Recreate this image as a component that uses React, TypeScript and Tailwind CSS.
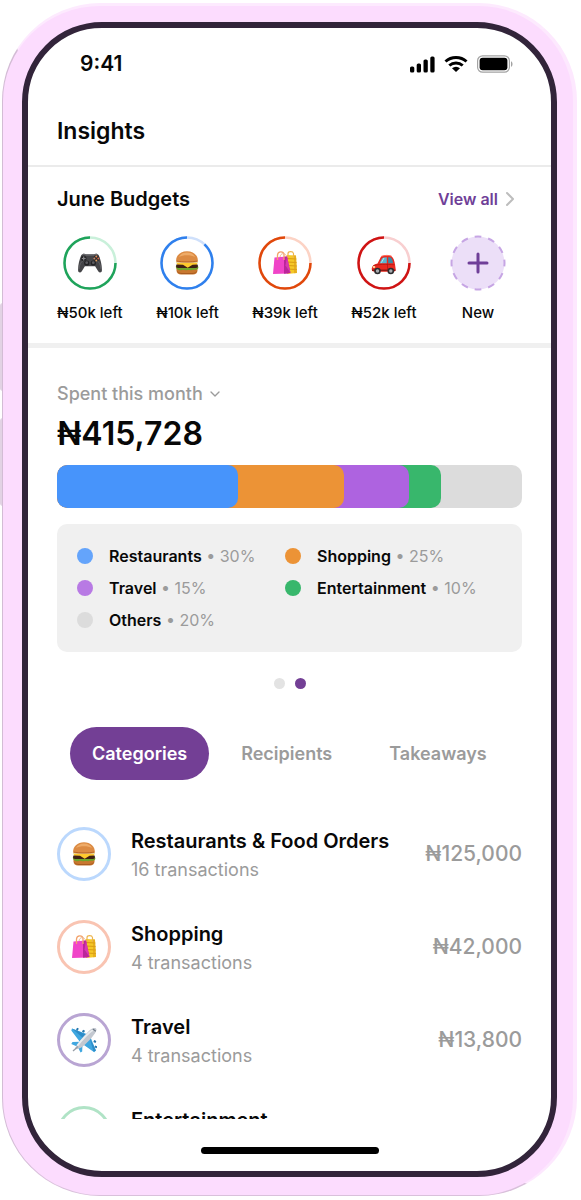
import { useState } from 'react';
import type { ReactNode } from 'react';
import { ChevronDown, ChevronRight } from 'lucide-react';

type IconName = 'game' | 'burger' | 'bags' | 'car' | 'plane';

interface Budget {
    icon: IconName;
    left: string;
    color: string;
    track: string;
    used: number;
}

interface Share {
    name: string;
    percent: number;
    dot: string;
}

interface Category {
    name: string;
    ring: string;
    icon?: IconName;
    count?: number;
    amount?: string;
}

const budgets: Budget[] = [
    { icon: 'game', left: '₦50k left', color: '#1fa35b', track: '#c9f0da', used: 75 },
    { icon: 'burger', left: '₦10k left', color: '#2f80ed', track: '#cfe0fb', used: 88 },
    { icon: 'bags', left: '₦39k left', color: '#e0480b', track: '#fcd3c5', used: 75 },
    { icon: 'car', left: '₦52k left', color: '#cf1414', track: '#f8cfd0', used: 75 },
];

const shares: Share[] = [
    { name: 'Restaurants', percent: 30, dot: 'bg-[#64a4fb]' },
    { name: 'Shopping', percent: 25, dot: 'bg-[#ec9336]' },
    { name: 'Travel', percent: 15, dot: 'bg-[#b87ae4]' },
    { name: 'Entertainment', percent: 10, dot: 'bg-[#38b76c]' },
    { name: 'Others', percent: 20, dot: 'bg-[#dcdcdc]' },
];

// Every segment starts at the left edge, the shorter ones lie on top
const segments = [
    { end: 82.6, color: 'bg-[#38b76c]' },
    { end: 75.8, color: 'bg-[#ae63e0]' },
    { end: 61.7, color: 'bg-[#ec9336]' },
    { end: 38.9, color: 'bg-[#4794fb]' },
];

const categories: Category[] = [
    { icon: 'burger', name: 'Restaurants & Food Orders', count: 16, amount: '₦125,000', ring: 'border-[#bbd8fd]' },
    { icon: 'bags', name: 'Shopping', count: 4, amount: '₦42,000', ring: 'border-[#f9c4b2]' },
    { icon: 'plane', name: 'Travel', count: 4, amount: '₦13,800', ring: 'border-[#b9a5d3]' },
    { name: 'Entertainment', ring: 'border-[#b0e3c6]' },
];

const tabs = ['Categories', 'Recipients', 'Takeaways'];

const drawings: Record<IconName, ReactNode> = {
    game: (
        <>
            <path d="M4.2 5.2C5 3.6 7.4 3.2 9 4.2h8c1.6-1 4-.6 4.800 1 1.800 4 3.300 10.300 3.100 15.300-.1 2.400-2.600 2.600-3.700.8l-3.100-5.100H7.900l-3.100 5.100c-1.100 1.800-3.600 1.600-3.700-.8C.9 15.500 2.400 9.200 4.200 5.200z" fill="#454548" />
            <path d="M4.800 5.300C5.700 4 7.500 4 8.900 5h8.200c1.400-1 3.200-1 4.100.3" stroke="#77777b" fill="none" />
            <path d="M2 19c.5-4.500 2-7.500 4.500-8.500M24 19c-.5-4.500-2-7.500-4.500-8.500" stroke="#646468" fill="none" strokeWidth=".8" />
            <circle cx="6.700" cy="8.500" r="2.800" fill="#252527" />
            <path d="M6.700 6.600v3.800M4.800 8.500h3.800" stroke="#87878b" strokeWidth="1.200" />
            <circle cx="9.700" cy="13" r="2.600" fill="#222224" />
            <circle cx="16.300" cy="13" r="2.600" fill="#222224" />
            <circle cx="9.700" cy="12.700" r="1.400" fill="#5c5c60" />
            <circle cx="16.300" cy="12.700" r="1.400" fill="#5c5c60" />
            <circle cx="19.300" cy="8.500" r="3" fill="#29292b" />
            <circle cx="19.300" cy="6.500" r="1" fill="#e08a55" />
            <circle cx="17.300" cy="8.500" r="1" fill="#c98a6a" />
            <circle cx="21.300" cy="8.500" r="1" fill="#d86b4b" />
            <circle cx="19.300" cy="10.500" r="1" fill="#e0a060" />
        </>
    ),
    burger: (
        <>
            <path d="M2.500 17h21v3.500c0 2.700-2 4-4.500 4H7c-2.500 0-4.500-1.300-4.500-4z" fill="#c8772f" />
            <path d="M3.500 21.500c1 1.600 3 2 4.500 2h10c1.500 0 3.500-.4 4.500-2" stroke="#a95c20" fill="none" />
            <path d="M1.800 16.500c1.500-1 3 .2 4.500 0s3-.2 4.500.3 3-.3 4.500 0 3-.5 4.500 0 3-1 4.400-.3c.5 1.500-.2 3-1.700 3-1.500.8-3-.2-4.500.5s-3-.3-5 .2-3.500-.8-5-.2-5.800.6-6.200-3.500z" fill="#6ea52c" />
            <rect x="2" y="14" width="22" height="4" rx="2" fill="#3f2015" />
            <path d="M2.200 12.500h21.600l-1 2-4.300.2-4.800 3-4.700-3-5.800-.2z" fill="#ffca2e" />
            <path d="M2 12.300h22" stroke="#e8e0a6" strokeWidth="1.200" />
            <path d="M2.200 11.700C1.500 5.500 6.500 1.300 13 1.300s11.500 4.200 10.800 10.400c-4 1.200-17.600 1.200-21.600 0z" fill="#dc8b43" />
            <path d="M5 7c1.300-3 4.500-4.500 8-4.500S19.700 4 21 7c-4-2.200-12-2.200-16 0z" fill="#eeab68" />
            <path d="M2.800 11c4.500 1.200 15.900 1.200 20.400 0" stroke="#b96528" fill="none" />
        </>
    ),
    bags: (
        <>
            <path d="M14.500 5l9.500.5 1 17.500-10 1z" fill="#f5c827" />
            <path d="M15 8.500l9.300.5M15 12l9.500.5M15 15.500l9.700.5M15 19l9.800.5" stroke="#d99b12" strokeWidth="1.200" />
            <path d="M22 5.300l2 .2 1 17.500-3 .3z" fill="#dda019" fillOpacity=".6" />
            <path d="M16 8V3.500c.3-2.500 5-2.500 5.500 0V8" stroke="#edb44c" fill="none" strokeWidth="1.200" />
            <path d="M2.500 7.500L15 6.500l1.500 17-15.500.5z" fill="#f044c8" />
            <path d="M12 6.800l3-.3 3.500 16.500-6.500.8z" fill="#bb2699" />
            <path d="M15 6.500l-1.500 9 5 7.500z" fill="#d938b4" />
            <path d="M5.500 10V5c.3-4 6-4.200 6.500-.5V10" stroke="#f3a36c" fill="none" strokeWidth="1.300" />
            <path d="M8 7c.4-4 5-4.500 6-1.500" stroke="#efb68d" fill="none" />
        </>
    ),
    car: (
        <>
            <path d="M6.500 13.500L9.300 8c.6-1.300 1.500-2 3-2.200 3-.4 6.500-.3 8 .4 2 1 3.200 4.500 3.700 8l.7 5c0 1.500-1 2.500-2.500 2.500H4c-2 0-3.300-1-3.300-2.800 0-3 2-4.500 5.800-5.400z" fill="#e92a20" />
            <path d="M8.600 13.200l2.200-4.400c.4-.8 1-1.200 2-1.300l3-.2v5.900z" fill="#5ab6cf" />
            <path d="M17.200 7.300c2 0 3 .2 3.500 1.100.8 1.300 1.200 2.800 1.300 4.800h-4.800z" fill="#398aa5" />
            <path d="M10.300 12.700l2.700-4.700" stroke="#b8e7ef" />
            <path d="M10 6.500c3-1.500 9-1.500 11 0" stroke="#ff6b5c" fill="none" />
            <path d="M2 16c4-2 14-1.800 21.500-1.200M16.500 13.500v6" stroke="#b9150f" fill="none" strokeWidth=".8" />
            <path d="M1 20.300h23.500" stroke="#8e1712" strokeWidth="1.500" />
            <ellipse cx="3" cy="17" rx="1.300" ry="1" fill="#ffe6a5" />
            <circle cx="6.500" cy="21" r="3.300" fill="#2d2d30" />
            <circle cx="6.500" cy="21" r="1.700" fill="#a9adb1" />
            <circle cx="19.800" cy="21" r="3.300" fill="#2d2d30" />
            <circle cx="19.800" cy="21" r="1.700" fill="#a9adb1" />
        </>
    ),
    plane: (
        <>
            <path d="M17 7.500L1 1.500.300 3.500l8.700 11.500zM19 9l6 14.500-1.800 1.800L11.500 17z" fill="#3fa7e0" />
            <path d="M16 8L1 1.500l11 9.500zM18.500 10.500l4 14L25 23.500z" fill="#2580bd" fillOpacity=".7" />
            <path d="M9 14.800l-7.500.2L.300 17 6 19.500zM11.500 17l-.3 7.500L9.500 25.500 6.800 20z" fill="#3fa7e0" />
            <path d="M5.500 1.800l1.800.8M11.500 3.700l2 1M24.300 13.500l-.9 2M25.300 19l-.8 1.800" stroke="#2576ad" fill="none" strokeWidth="2.400" />
            <path d="M4 22C4.500 18.500 15 6 20 2.200c2.300-1.700 5.700-1.800 5.500.4C25.200 6.500 17.500 15 12 19.300 9.300 21.300 6 22.800 4 22z" fill="#c3c8d0" />
            <path d="M6.300 18.800C10 13.500 17.500 5.500 22 3" stroke="#e9ecef" fill="none" strokeWidth="2" />
            <path d="M21.800 1.900l3 2.300" stroke="#6e7986" strokeWidth="1.200" />
            <path d="M2 24l5-4.500" stroke="#979ea6" strokeWidth="1.300" />
        </>
    ),
};

const CategoryIcon = ({ name }: { name: IconName }) => (
    <svg viewBox="0 0 26 26" className="size-[26px]" aria-hidden="true">
        {drawings[name]}
    </svg>
);

const StatusBar = () => (
    <div className="flex items-center justify-between pt-5 pr-[38px] pl-13">
        <span className="text-[21px] leading-8 font-semibold">9:41</span>
        <div className="flex items-center gap-[9px]" aria-hidden="true">
            <svg viewBox="0 0 26 18" className="h-[18px] w-[26px]">
                <rect x="1" y="11.500" width="4.300" height="6" rx="1.600" />
                <rect x="7.700" y="8.500" width="4.300" height="9" rx="1.600" />
                <rect x="14.500" y="4.500" width="4.300" height="13" rx="1.600" />
                <rect x="21.300" y="1.500" width="4.300" height="16" rx="1.600" />
            </svg>
            <svg viewBox="0 0 24 18" className="h-[18px] w-6">
                <path d="M1.500 6.500a15.500 15.500 0 0 1 21 0M5.300 10.500a10 10 0 0 1 13.400 0" fill="none" stroke="black" strokeWidth="3" />
                <path d="M12 17l-4-3.700a6 6 0 0 1 8 0z" />
            </svg>
            <svg viewBox="0 0 36 18" className="h-[18px] w-9">
                <rect x=".6" y=".8" width="31.800" height="16.400" rx="5" fill="none" stroke="#a3a3a3" strokeWidth="1.200" />
                <rect x="2.600" y="2.800" width="27.800" height="12.400" rx="3" />
                <path d="M34 6.200c2 .8 2 4.800 0 5.600z" fill="#a3a3a3" />
            </svg>
        </div>
    </div>
);

const BudgetRing = ({ budget }: { budget: Budget }) => (
    <li className="flex flex-col items-center gap-[10px]">
        <div className="grid size-14 place-items-center">
            <svg viewBox="0 0 56 56" className="col-start-1 row-start-1 size-14" aria-hidden="true">
                <circle cx="28" cy="28" r="25.500" fill="none" stroke={budget.track} strokeWidth="2.500" />
                <circle
                    cx="28"
                    cy="28"
                    r="25.500"
                    fill="none"
                    stroke={budget.color}
                    strokeWidth="2.500"
                    pathLength="100"
                    strokeDasharray={`${budget.used} 100`}
                    transform="matrix(0 -1 -1 0 56 56)"
                />
            </svg>
            <div className="col-start-1 row-start-1">
                <CategoryIcon name={budget.icon} />
            </div>
        </div>
        <span className="text-[15px] leading-6 font-medium whitespace-nowrap">{budget.left}</span>
    </li>
);

const CategoryRow = ({ category }: { category: Category }) => (
    <li className="flex items-start">
        <div className={`grid size-[54px] shrink-0 place-items-center rounded-full border-[3px] ${category.ring}`}>
            {category.icon && <CategoryIcon name={category.icon} />}
        </div>
        <div className="ml-5 min-w-0 flex-1">
            <h3 className="text-[20px] leading-7 font-semibold whitespace-nowrap">{category.name}</h3>
            {category.count && <p className="text-[18px] leading-[30px] text-[#9b9b9b]">{category.count} transactions</p>}
        </div>
        <span className="text-[21px] leading-[54px] font-medium text-[#9b9b9b]">{category.amount}</span>
    </li>
);

const App = () => {
    const [activeTab, setActiveTab] = useState('Categories');

    return (
        <div className="relative h-screen bg-white pt-[3px] pr-1 pb-1 pl-[2px] font-['Inter',sans-serif] text-[#080808]">
            {/* Volume buttons */}
            <div className="absolute top-[303px] left-0 h-[88px] w-[3px] rounded-l-full bg-[#e2d2e4]" />
            <div className="absolute top-[418px] left-0 h-[88px] w-[3px] rounded-l-full bg-[#e2d2e4]" />

            <div className="relative h-full rounded-[98px] border-t-[3px] border-r-4 border-b border-l border-t-[#fdeafe] border-r-[#fde8fe] border-b-[#d9c0db] border-l-[#d3bcd5] bg-[#fcdcfe] pt-4 pr-4 pb-[18px] pl-[19px]">
                <main className="flex h-full flex-col overflow-hidden rounded-[80px] border-[6px] border-[#32243a] bg-white">
                    <StatusBar />

                    <header className="border-b-2 border-[#ebebeb] px-[29px] pt-[35px] pb-[18px]">
                        <h1 className="text-[23px] leading-8 font-semibold">Insights</h1>
                    </header>

                    <section className="border-b-[5px] border-[#f0f0f0] px-[29px] pt-4 pb-[18px]">
                        <div className="flex items-center justify-between">
                            <h2 className="text-[20px] leading-8 font-semibold">June Budgets</h2>
                            <a href="#budgets" className="flex items-center text-[16px] font-semibold text-[#6f3f98]">
                                View all
                                <ChevronRight className="size-6 text-[#bdbdbd]" />
                            </a>
                        </div>
                        <ul className="mt-5 flex justify-between pr-4">
                            {budgets.map((budget) => (
                                <BudgetRing key={budget.left} budget={budget} />
                            ))}
                            <li>
                                <button className="flex flex-col items-center gap-[10px]">
                                    <svg viewBox="0 0 56 56" className="size-14" aria-hidden="true">
                                        <circle cx="28" cy="28" r="26.500" fill="#ecdff8" stroke="#c6a5e4" strokeWidth="2" pathLength="120" strokeDasharray="5 5" strokeDashoffset="2.500" />
                                        <path d="M28 19v18M19 28h18" stroke="#6f3f98" strokeWidth="3" strokeLinecap="round" />
                                    </svg>
                                    <span className="text-[15px] leading-6 font-medium">New</span>
                                </button>
                            </li>
                        </ul>
                    </section>

                    <section className="px-[29px] pt-8">
                        <div className="flex items-center gap-1 text-[#9b9b9b]">
                            <select aria-label="Period" className="appearance-none text-[18px] leading-7 font-medium">
                                <option>Spent this month</option>
                            </select>
                            <ChevronDown className="size-4" />
                        </div>
                        <p className="mt-[6px] text-[32px] leading-10 font-semibold">₦415,728</p>

                        <div className="mt-[11px] grid h-[43px] overflow-hidden rounded-[10px] bg-[#dcdcdc]">
                            {segments.map((segment) => (
                                <div
                                    key={segment.end}
                                    className={`col-start-1 row-start-1 rounded-[10px] ${segment.color}`}
                                    style={{ width: `${segment.end}%` }}
                                />
                            ))}
                        </div>

                        <ul className="mt-4 grid grid-cols-[208px_1fr] rounded-[10px] bg-[#f0f0f0] px-5 py-4">
                            {shares.map((share) => (
                                <li key={share.name} className="flex items-center gap-4 text-[16px] leading-8">
                                    <span className={`size-4 rounded-full ${share.dot}`} />
                                    <span className="whitespace-nowrap text-[#9b9b9b]">
                                        <span className="font-semibold text-[#080808]">{share.name}</span> • {share.percent}%
                                    </span>
                                </li>
                            ))}
                        </ul>

                        <div className="mt-[26px] flex justify-center gap-[10px]">
                            <span className="size-[11px] rounded-full bg-[#e3e3e3]" />
                            <span className="size-[11px] rounded-full bg-[#733f95]" />
                        </div>
                    </section>

                    <div role="tablist" className="mt-[38px] flex gap-[7px] px-[42px]">
                        {tabs.map((tab) => (
                            <button
                                key={tab}
                                role="tab"
                                aria-selected={activeTab === tab}
                                onClick={() => setActiveTab(tab)}
                                className={`rounded-full text-[18px] leading-[53px] font-semibold ${
                                    activeTab === tab ? 'bg-[#733f95] px-[22px] text-white' : 'px-[25px] text-[#9b9b9b]'
                                }`}
                            >
                                {tab}
                            </button>
                        ))}
                    </div>

                    <ul className="mt-[47px] flex min-h-0 flex-1 flex-col gap-[35px] overflow-y-auto px-[29px] [scrollbar-width:none]">
                        {categories.map((category) => (
                            <CategoryRow key={category.name} category={category} />
                        ))}
                    </ul>

                    <div className="mx-auto mt-7 mb-[17px] h-[7px] w-[178px] shrink-0 rounded-full bg-black" />
                </main>
            </div>
        </div>
    );
};

export default App;
